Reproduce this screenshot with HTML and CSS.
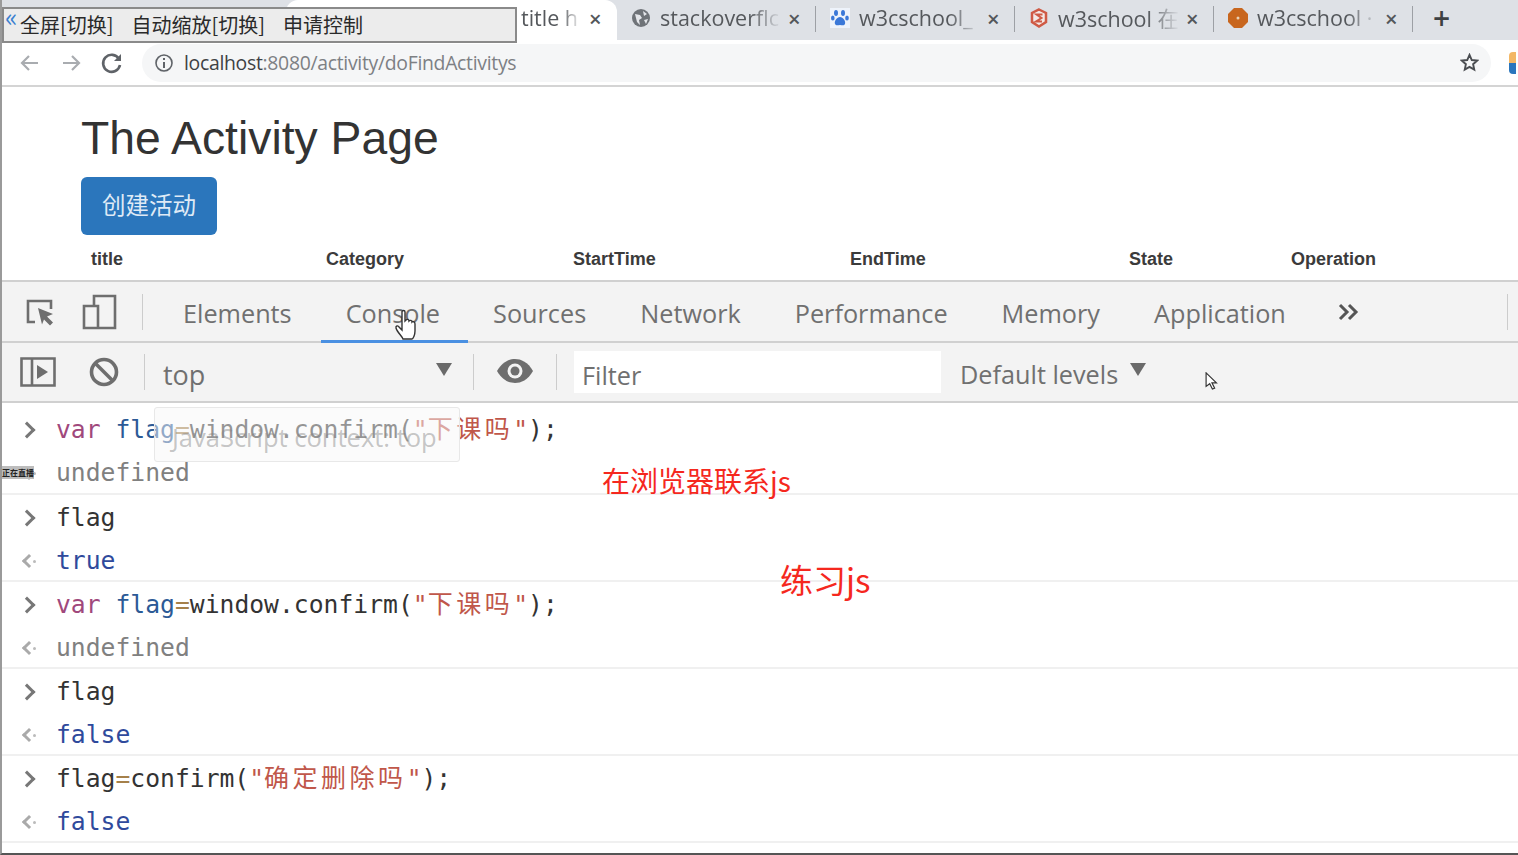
FILE: index.html
```html
<!DOCTYPE html>
<html lang="en">
<head>
  <meta charset="UTF-8">
  <title>The Activity Page</title>
  <link rel="stylesheet" href="styles.css">
</head>
<body>
  <div class="screen">

    <div class="tabstrip">
      <div class="tab tab_active">
        <span class="tab_title">title h</span>
        <span class="tab_close">×</span>
      </div>
      <div class="tab">
        <svg class="favicon" viewBox="0 0 20 20"><circle cx="10" cy="10" r="9" fill="#6f7378"/><path d="M4 6l5 1 2 3-3 2 1 5-3-3zM12 3l4 3-3 2zM13 12l4-1-2 5z" fill="#e4e6ea"/></svg>
        <span class="tab_title">stackoverflc</span>
        <span class="tab_close">×</span>
      </div>
      <div class="tab">
        <svg class="favicon" viewBox="0 0 20 20"><rect width="20" height="20" fill="#eef3fb"/><g fill="#3b78d8"><ellipse cx="6" cy="5" rx="2" ry="3"/><ellipse cx="13" cy="5" rx="2" ry="3"/><ellipse cx="2.8" cy="10" rx="1.8" ry="2.6"/><ellipse cx="17" cy="10" rx="1.8" ry="2.6"/><path d="M10 9c3 0 6 4 5 7-1 2-3 1-5 1s-4 1-5-1c-1-3 2-7 5-7z"/></g></svg>
        <span class="tab_title">w3cschool_</span>
        <span class="tab_close">×</span>
      </div>
      <div class="tab">
        <svg class="favicon" viewBox="0 0 20 20"><path d="M10 1.500l7 3.500v9l-7 4.500-7-4.500V5z" fill="#f3e9e6" stroke="#cf5a45" stroke-width="2.5"/><path d="M13.500 6.500h-6l5 3.500-5.500 3.500h6" fill="none" stroke="#cf5a45" stroke-width="2"/></svg>
        <span class="tab_title">w3school 在</span>
        <span class="tab_close">×</span>
      </div>
      <div class="tab">
        <svg class="favicon" viewBox="0 0 20 20"><path d="M6 0h8l6 6v8l-6 6H6l-6-6V6z" fill="#c8661e"/><circle cx="10" cy="10" r="1.5" fill="#e9d2b8"/></svg>
        <span class="tab_title">w3cschool ·</span>
        <span class="tab_close">×</span>
      </div>
      <span class="new_tab">+</span>
    </div>

    <div class="addressbar">
      <svg class="nav_icon" viewBox="0 0 24 24"><path d="M20 12H5M11 5l-7 7 7 7" fill="none" stroke="#a9acb0" stroke-width="2.2"/></svg>
      <svg class="nav_icon" viewBox="0 0 24 24"><path d="M4 12h15M13 5l7 7-7 7" fill="none" stroke="#a9acb0" stroke-width="2.2"/></svg>
      <svg class="nav_icon" viewBox="0 0 24 24"><path d="M19 8a8.500 8.500 0 1 0 1 6" fill="none" stroke="#5f6368" stroke-width="2.6"/><path d="M21 3v7h-7z" fill="#5f6368"/></svg>
      <div class="omnibox">
        <svg class="info_icon" viewBox="0 0 20 20"><circle cx="10" cy="10" r="8" fill="none" stroke="#5f6368" stroke-width="1.6"/><path d="M10 9v6M10 5v2" stroke="#5f6368" stroke-width="2"/></svg>
        <span class="url"><b>localhost</b>:8080/activity/doFindActivitys</span>
        <svg class="star_icon" viewBox="0 0 20 20"><path d="M10 2l2.400 5.400 5.600.6-4.200 3.800 1.200 5.700L10 14.600l-5 2.900 1.200-5.700L2 8l5.600-.6z" fill="none" stroke="#4a4d51" stroke-width="2"/></svg>
      </div>
      <span class="ext_icon"></span>
    </div>

    <div class="page">
      <h1 class="page_title">The Activity Page</h1>
      <a class="create_btn">创建活动</a>
      <table class="activity_table">
        <tr>
          <th class="col_title">title</th>
          <th class="col_category">Category</th>
          <th class="col_start">StartTime</th>
          <th class="col_end">EndTime</th>
          <th class="col_state">State</th>
          <th>Operation</th>
        </tr>
      </table>
    </div>

    <div class="devtools">
      <div class="dev_tabs">
        <svg class="dev_icon" viewBox="0 0 34 34"><path d="M12 27H5V6h23v8" fill="none" stroke="#6e6e6e" stroke-width="2.6"/><path d="M15 13l15 6-6 2.500 6 6-3 3-6-6-2 5z" fill="#6e6e6e"/></svg>
        <svg class="dev_icon device_icon" viewBox="0 0 34 36"><path d="M12 12V2h21v32H2V12h14v22" fill="none" stroke="#6e6e6e" stroke-width="2.6"/></svg>
        <span class="dev_sep"></span>
        <a class="dev_tab">Elements</a>
        <a class="dev_tab dev_tab_active">Console</a>
        <a class="dev_tab">Sources</a>
        <a class="dev_tab">Network</a>
        <a class="dev_tab">Performance</a>
        <a class="dev_tab">Memory</a>
        <a class="dev_tab">Application</a>
        <svg class="more_tabs" viewBox="0 0 22 18"><path d="M2 2l7 7-7 7M11 2l7 7-7 7" fill="none" stroke="#555" stroke-width="3"/></svg>
        <span class="dev_sep end_sep"></span>
      </div>

      <div class="dev_toolbar">
        <svg class="tool_icon" viewBox="0 0 36 30"><path d="M1.500 1.500h33v27h-33zM12 1.500v27" fill="none" stroke="#6e6e6e" stroke-width="2.6"/><path d="M17 8l11 7-11 7z" fill="#6e6e6e"/></svg>
        <svg class="tool_icon clear_icon" viewBox="0 0 30 30"><circle cx="15" cy="15" r="12.500" fill="none" stroke="#6e6e6e" stroke-width="3.6"/><path d="M6 6l18 18" stroke="#6e6e6e" stroke-width="3.6"/></svg>
        <span class="dev_sep"></span>
        <div class="context_select">
          <span class="tool_label top_label">top</span>
          <span class="caret"></span>
        </div>
        <span class="dev_sep"></span>
        <svg class="eye_icon" viewBox="0 0 36 24"><path d="M0 12C5 3 12 0 18 0s13 3 18 12c-5 9-12 12-18 12S5 21 0 12z" fill="#6e6e6e"/><circle cx="18" cy="12" r="7.500" fill="#f3f3f3"/><circle cx="18" cy="12" r="4.500" fill="#6e6e6e"/></svg>
        <span class="dev_sep"></span>
        <div class="filter_box">Filter</div>
        <div class="levels">
          <span class="tool_label">Default levels</span>
          <span class="caret"></span>
        </div>
      </div>

      <div class="console">
        <div class="group">
          <div class="line"><span class="prompt"></span><code><i class="kw">var</i> <i class="var">flag</i><i class="op">=</i>window.confirm(<i class="str">"<i class="cjk">下课吗</i>"</i>);</code></div>
          <div class="line"><span class="prompt back"></span><code class="undef">undefined</code></div>
        </div>
        <div class="group">
          <div class="line"><span class="prompt"></span><code>flag</code></div>
          <div class="line"><span class="prompt back"></span><code class="bool">true</code></div>
        </div>
        <div class="group">
          <div class="line"><span class="prompt"></span><code><i class="kw">var</i> <i class="var">flag</i><i class="op">=</i>window.confirm(<i class="str">"<i class="cjk">下课吗</i>"</i>);</code></div>
          <div class="line"><span class="prompt back"></span><code class="undef">undefined</code></div>
        </div>
        <div class="group">
          <div class="line"><span class="prompt"></span><code>flag</code></div>
          <div class="line"><span class="prompt back"></span><code class="bool">false</code></div>
        </div>
        <div class="group">
          <div class="line"><span class="prompt"></span><code>flag<i class="op">=</i>confirm(<i class="str">"<i class="cjk">确定删除吗</i>"</i>);</code></div>
          <div class="line"><span class="prompt back"></span><code class="bool">false</code></div>
        </div>
      </div>
    </div>

    <!-- things that float over the recording -->
    <div class="share_bar">
      <span class="share_arrow">«</span>
      <span>全屏[切换]</span>
      <span>自动缩放[切换]</span>
      <span>申请控制</span>
    </div>
    <div class="context_tip">JavaScript context: top</div>
    <div class="rec_badge">正在直播</div>
    <div class="note note_one">在浏览器联系js</div>
    <div class="note note_two">练习js</div>
    <svg class="hand_cursor" viewBox="0 0 24 32"><path d="M8 3c0-2 3-2 3 0v9l1-1c1-1 3-1 3 1 1-1 3-1 3 1 1-1 3 0 3 2v7c0 4-2 8-3 8H9c-1-3-6-7-7-11-.5-2 2-3 3-1l3 3z" fill="#fff" stroke="#333" stroke-width="1.4"/></svg>
    <svg class="arrow_cursor" viewBox="0 0 14 20"><path d="M1 1v15l4-3 3 6 2.500-1-3-6h5z" fill="#fff" stroke="#333" stroke-width="1.3"/></svg>
  </div>
</body>
</html>
```

FILE: styles.css
```css
html, body {
  margin: 0;
  padding: 0;
}
.screen {
  position: relative;
  width: 1518px;
  height: 855px;
  overflow: hidden;
  box-sizing: border-box;
  border-left: 2px solid #9a9a9a;
  border-bottom: 2px solid #555;
  background: #fff;
  font-family: "Open Sans", "Noto Sans CJK SC", sans-serif;
  color: #444;
}

/* browser chrome */
.tabstrip {
  display: flex;
  align-items: center;
  height: 40px;
  padding-left: 284px;
  background: #dee1e6;
}
.tab {
  display: flex;
  align-items: center;
  box-sizing: border-box;
  width: 199px;
  height: 40px;
  padding: 0 0 5px 14px;
  font-size: 21.5px;
  color: #55585c;
  position: relative;
}
.tab::after {
  content: "";
  position: absolute;
  right: 0;
  top: 6px;
  width: 1px;
  height: 26px;
  background: #9da0a5;
}
.tab_active {
  width: 331px;
  padding-left: 235px;
  border-radius: 12px 12px 0 0;
  background: #fff;
}
.tab_active::after {
  display: none;
}
.favicon {
  flex: none;
  width: 20px;
  height: 20px;
  margin-right: 9px;
}
.tab_title {
  flex: 1;
  min-width: 0;
  overflow: hidden;
  white-space: nowrap;
  -webkit-mask-image: linear-gradient(to right, #000 70%, transparent 95%);
  mask-image: linear-gradient(to right, #000 70%, transparent 95%);
}
.tab_active .tab_title {
  -webkit-mask-image: linear-gradient(to right, #000 60%, transparent 88%);
  mask-image: linear-gradient(to right, #000 60%, transparent 88%);
}
.tab_close {
  flex: none;
  width: 28px;
  font-size: 22px;
  font-weight: 600;
  color: #54575b;
}
.new_tab {
  margin: -5px 0 0 20px;
  font-size: 30px;
  font-weight: 600;
  line-height: 36px;
  color: #3d4043;
}
.addressbar {
  display: flex;
  align-items: center;
  height: 45px;
  padding-left: 16px;
  border-bottom: 2px solid #d4d4d4;
  background: #fff;
}
.nav_icon {
  width: 24px;
  height: 24px;
  margin-right: 17px;
}
.omnibox {
  display: flex;
  align-items: center;
  width: 1349px;
  height: 38px;
  margin-left: 1px;
  padding-left: 12px;
  box-sizing: border-box;
  border-radius: 19px;
  background: #f5f6f7;
}
.info_icon {
  width: 20px;
  height: 20px;
  margin-right: 10px;
}
.url {
  flex: 1;
  font-size: 19.4px;
  color: #7d8084;
  letter-spacing: -0.3px;
}
.url b {
  font-weight: 400;
  color: #3e4144;
}
.star_icon {
  width: 19px;
  height: 19px;
  margin-right: 12px;
}
.ext_icon {
  width: 7px;
  height: 22px;
  margin-left: 18px;
  background: linear-gradient(#f3b765 50%, #2a76bd 50%);
  border-radius: 4px 0 0 4px;
}

/* page under the chrome */
.page {
  box-sizing: border-box;
  height: 193px;
  padding: 24px 0 0 79px;
}
.page_title {
  margin: 0 0 12px;
  font-family: "Liberation Sans", sans-serif;
  font-size: 46.3px;
  font-weight: 400;
  line-height: 54px;
  color: #333;
}
.create_btn {
  display: block;
  width: 136px;
  height: 58px;
  border-radius: 6px;
  background: #2b76bc;
  color: #dfeaf6;
  font-family: "Noto Sans CJK SC", sans-serif;
  font-size: 23.5px;
  line-height: 54px;
  text-align: center;
}
.activity_table {
  border-collapse: collapse;
  margin-top: 11px;
  table-layout: fixed;
  width: 1400px;
}
.activity_table th {
  padding: 0 0 0 10px;
  font-family: "Liberation Sans", sans-serif;
  font-size: 18px;
  line-height: 26px;
  text-align: left;
  color: #3b3b3b;
}
.col_title { width: 225px; }
.col_category { width: 237px; }
.col_start { width: 267px; }
.col_end { width: 269px; }
.col_state { width: 152px; }

/* devtools */
.devtools {
  border-top: 2px solid #d0d0d0;
}
.dev_tabs, .dev_toolbar {
  display: flex;
  align-items: center;
  background: #f3f3f3;
  border-bottom: 2px solid #d0d0d0;
  font-size: 25.25px;
  color: #707070;
}
.dev_tabs {
  height: 59px;
  padding-left: 21px;
}
.dev_icon {
  width: 34px;
  height: 34px;
}
.device_icon {
  width: 36px;
  height: 36px;
  margin-left: 24px;
  margin-right: 25px;
}
.dev_sep {
  flex: none;
  width: 1px;
  height: 36px;
  background: #ccc;
}
.dev_tabs .dev_sep {
  margin-right: 15px;
}
.dev_tabs .end_sep {
  margin: 0 10px 0 auto;
}
.dev_tab {
  align-self: flex-start;
  padding: 0 25px;
  height: 61px;
  line-height: 62px;
  box-sizing: border-box;
  margin-right: 4px;
}
.dev_tab_active {
  padding-right: 28px;
  margin-right: 0;
  border-bottom: 3px solid #4a90e2;
}
.more_tabs {
  width: 22px;
  height: 18px;
  margin: 0 0 0 23px;
}
.dev_toolbar {
  height: 58px;
  padding-left: 18px;
}
.tool_icon {
  width: 36px;
  height: 30px;
}
.clear_icon {
  margin-left: 30px;
  margin-right: 22px;
}
.tool_label {
  margin-top: 4px;
}
.top_label {
  font-size: 27px;
}
.context_select {
  display: flex;
  align-items: center;
  justify-content: space-between;
  box-sizing: border-box;
  width: 328px;
  padding: 0 21px 0 18px;
}
.caret {
  width: 0;
  height: 0;
  margin-top: -5px;
  border-left: 8px solid transparent;
  border-right: 8px solid transparent;
  border-top: 13px solid #6a6a6a;
}
.eye_icon {
  width: 36px;
  height: 24px;
  margin: -2px 23px 0;
}
.filter_box {
  box-sizing: border-box;
  width: 367px;
  height: 42px;
  margin-left: 17px;
  padding-left: 8px;
  background: #fff;
  line-height: 48px;
}
.levels {
  display: flex;
  align-items: center;
  margin-left: 19px;
}
.levels .caret {
  margin-left: 12px;
}

/* console rows */
.console {
  background: #fff;
}
.group {
  box-sizing: border-box;
  display: flex;
  flex-direction: column;
  gap: 3px;
  height: 87px;
  padding-top: 3px;
  border-bottom: 2px solid #f0f0f0;
}
.group:first-child {
  height: 92px;
  padding-top: 7px;
}
.line {
  flex: none;
  display: flex;
  align-items: center;
  height: 40px;
}
.prompt {
  position: relative;
  flex: none;
  width: 54px;
}
.prompt::before {
  content: "";
  position: absolute;
  left: 19px;
  top: -6px;
  width: 9px;
  height: 9px;
  border-top: 3px solid #777;
  border-right: 3px solid #777;
  transform: rotate(45deg);
}
.prompt.back::before {
  left: 22px;
  width: 7px;
  height: 7px;
  top: -5px;
  border-top-color: #aaa;
  border-right: none;
  border-left: 3px solid #aaa;
  transform: rotate(-45deg);
}
.prompt.back::after {
  content: "";
  position: absolute;
  left: 31px;
  top: -1px;
  width: 3px;
  height: 3px;
  border-radius: 50%;
  background: #bbb;
}
code {
  font-family: "DejaVu Sans Mono", "Noto Sans CJK SC", monospace;
  font-size: 24.7px;
  line-height: 30px;
  color: #333;
  white-space: pre;
}
code i {
  font-style: normal;
}
.kw { color: #a0487c; }
.var { color: #2c5a96; }
.op { color: #a5804a; }
.str { color: #c0574a; }
.cjk {
  font-family: "Noto Sans CJK SC", sans-serif;
  font-size: 25px;
  line-height: 0;
  letter-spacing: 3.5px;
}
.undef { color: #808080; }
.bool { color: #2f4a9c; }

/* overlays */
.share_bar {
  position: absolute;
  left: 0;
  top: 7px;
  box-sizing: border-box;
  display: flex;
  gap: 18px;
  width: 515px;
  height: 36px;
  padding-left: 16px;
  border: 2px solid #8a8a8a;
  background: #ececec;
  font-family: "Noto Sans CJK SC", sans-serif;
  font-size: 20px;
  line-height: 32px;
  color: #2a2a2a;
}
.share_arrow {
  position: absolute;
  left: 1px;
  top: -9px;
  color: #3a7fd0;
  font-size: 26px;
}
.context_tip {
  position: absolute;
  left: 152px;
  top: 407px;
  box-sizing: border-box;
  width: 306px;
  height: 55px;
  padding: 12px 0 0 17px;
  border: 1px solid #e8e8e8;
  border-radius: 3px;
  background: rgba(248, 248, 248, 0.5);
  font-size: 25.5px;
  color: rgba(130, 130, 130, 0.45);
  white-space: nowrap;
}
.rec_badge {
  position: absolute;
  left: 0;
  top: 466px;
  width: 32px;
  height: 13px;
  overflow: hidden;
  background: #bdbdbd;
  font-family: "Noto Sans CJK SC", sans-serif;
  font-size: 8px;
  font-weight: 700;
  line-height: 13px;
  color: #222;
  text-align: center;
}
.note {
  position: absolute;
  font-family: "Noto Sans CJK SC", sans-serif;
  font-size: 28px;
  color: #f5281e;
}
.note_one {
  left: 600px;
  top: 460px;
}
.note_two {
  left: 778px;
  top: 555px;
  font-size: 33px;
}
.hand_cursor {
  position: absolute;
  left: 392px;
  top: 309px;
  width: 24px;
  height: 32px;
}
.arrow_cursor {
  position: absolute;
  left: 1203px;
  top: 372px;
  width: 13px;
  height: 18px;
}
```
